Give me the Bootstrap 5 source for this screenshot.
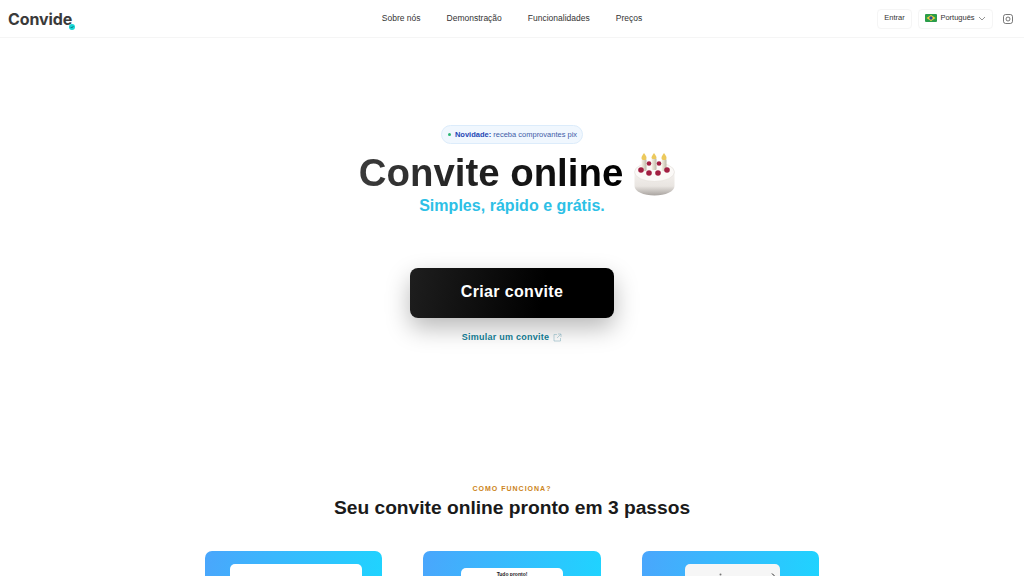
<!DOCTYPE html>
<html lang="pt-BR">
<head>
    <meta charset="UTF-8">
    <meta name="viewport" content="width=device-width, initial-scale=1.0">
    <title>Convide - Convite online</title>
    <link href="https://cdn.jsdelivr.net/npm/bootstrap@5.3.0/dist/css/bootstrap.min.css" rel="stylesheet">
    <style>
        html, body { height: 576px; overflow: hidden; }
        body { font-family: "Liberation Sans", Arial, sans-serif; color: #1a1a1a; background: #fff; }
        .top-bar { height: 38px; border-bottom: 1px solid #f5f5f5; padding: 0 11px 0 8px; }
        .brand-logo { font-family: "Inter", sans-serif; font-weight: 700; font-size: 16px; letter-spacing: -.1px; color: #3a3a3a; text-decoration: none; line-height: 1; }
        .brand-dot { width: 6px; height: 6px; right: -3px; bottom: -3px; }
        .top-links { left: 0; right: 0; gap: 26px; }
        .top-links a { font-size: 8.5px; color: #333; text-decoration: none; }
        .top-btn { font-size: 7.5px; color: #333; border: 1px solid #f5f5f5; border-radius: 4px; height: 20px; padding: 0 6px 1px; background: #fff; }
        .enter-btn { width: 35px; margin-right: 6px; }
        .lang-btn { width: 75px; }
        .insta-icon { margin-left: 10px; }
        .hero-box { padding-top: 87px; }
        .pill-new { font-size: 7.5px; line-height: 1; padding: 4px 5px 4px 6px; height: 19px; border-radius: 10px; background: #f0f7fe; border: 1px solid #dcecfb; color: #3f5da8; }
        .pill-new b { color: #2447b5; }
        .pill-dot { width: 3px; height: 3px; border-radius: 50%; background: #2bb673; }
        .hero-row { padding-left: 10px; gap: 11px; margin-top: 6px; }
        .hero-title { font-size: 38.4px; font-weight: 700; line-height: 46px; margin: 0; background: linear-gradient(90deg, #3b3b3b, #000); -webkit-background-clip: text; background-clip: text; color: transparent; }
        .hero-cake { margin-top: 3px; }
        .hero-sub { font-size: 16px; font-weight: 700; line-height: 20px; letter-spacing: .03px; color: #2dc0e6; margin: 0; }
        .cta-btn { width: 204px; height: 50px; margin-top: 52px; border-radius: 8px; border: 0; font-size: 16px; font-weight: 700; letter-spacing: .35px; color: #fff; padding-bottom: 3px; background: linear-gradient(100deg, #1e1e1e, #000 65%); box-shadow: 0 10px 24px rgba(0,0,0,.28); }
        .sim-link { font-size: 9px; font-weight: 700; letter-spacing: .25px; color: #12788f; text-decoration: none; margin-top: 13px; }
        .steps-box { padding-top: 139px; }
        .steps-tag { font-size: 7px; font-weight: 700; letter-spacing: 1px; color: #cc8420; line-height: 9px; margin: 0; }
        .steps-title { font-size: 19.2px; font-weight: 700; line-height: 24px; margin: 3px 0 0; color: #1a1a1a; }
        .steps-row { margin-top: 31px; gap: 41px; }
        .step-tile { width: 177.5px; height: 160px; border-radius: 7px; background: linear-gradient(100deg, #4aa6fc, #1ad9ff); overflow: hidden; flex: none; }
        .step-screen { background: #fff; border-radius: 5px 5px 0 0; height: 140px; }
        .screen-a { width: 132px; margin: 13px 0 0 25px; }
        .screen-b { width: 102px; margin: 17px auto 0; font-size: 5px; font-weight: 700; text-align: center; padding-top: 3px; line-height: 6px; }
        .screen-c { width: 95px; margin: 13px 0 0 43px; background: #f6f6f6; padding: 9px 5px 0 34px; }
    </style>
</head>
<body>
<nav class="top-bar d-flex align-items-center justify-content-between position-relative">
    <a class="brand-logo position-relative" href="#">Convide
        <svg class="brand-dot position-absolute" viewBox="0 0 6 6"><circle cx="3" cy="3" r="3" fill="#17d6d6"/><path d="M1.700 3 2.700 4 4.400 2.100" fill="none" stroke="#0b5d63" stroke-width=".8"/></svg>
    </a>
    <div class="top-links position-absolute d-flex justify-content-center">
        <a href="#">Sobre nós</a>
        <a href="#">Demonstração</a>
        <a href="#">Funcionalidades</a>
        <a href="#">Preços</a>
    </div>
    <div class="d-flex align-items-center">
        <button class="top-btn enter-btn" type="button">Entrar</button>
        <button class="top-btn lang-btn d-flex align-items-center justify-content-between" type="button">
            <svg width="12" height="8" viewBox="0 0 12 8"><rect width="12" height="8" rx="1" fill="#2a9d4a"/><path d="M6 1 10.500 4 6 7 1.500 4Z" fill="#f2d43a"/><circle cx="6" cy="4" r="1.700" fill="#2a4a9d"/></svg>
            <span>Português</span>
            <svg width="8" height="5" viewBox="0 0 8 5"><path d="M1 1l3 3 3-3" fill="none" stroke="#666" stroke-width=".7"/></svg>
        </button>
        <svg class="insta-icon" width="10" height="10" viewBox="0 0 10 10"><rect x=".5" y=".5" width="9" height="9" rx="2.200" fill="none" stroke="#555" stroke-width=".8"/><circle cx="5" cy="5" r="2" fill="none" stroke="#555" stroke-width=".8"/></svg>
    </div>
</nav>

<main>
    <section class="hero-box d-flex flex-column align-items-center text-center">
        <div class="pill-new d-flex align-items-center gap-1">
            <span class="pill-dot"></span>
            <span><b>Novidade:</b> receba comprovantes pix</span>
        </div>
        <div class="hero-row d-flex align-items-start">
            <h1 class="hero-title">Convite online</h1>
            <svg class="hero-cake" width="41" height="43" viewBox="0 0 41 43">
                <defs>
                    <linearGradient id="cakeSide" x1="0" x2="0" y1="0" y2="1"><stop offset="0" stop-color="#f4f1ee"/><stop offset=".6" stop-color="#e9e5e1"/><stop offset="1" stop-color="#a9a4a0"/></linearGradient>
                    <linearGradient id="candle" x1="0" x2="1" y1="0" y2="0"><stop offset="0" stop-color="#f7f2e6"/><stop offset="1" stop-color="#bfb8a8"/></linearGradient>
                </defs>
                <path d="M.5 19v14c0 5.500 9 9.500 20 9.500s20-4 20-9.500V19Z" fill="url(#cakeSide)"/>
                <ellipse cx="20.500" cy="19" rx="20" ry="9.500" fill="#fbf9f7" stroke="#e2ded9" stroke-width=".6"/>
                <rect x="7.500" y="6" width="5" height="12" rx="1" fill="url(#candle)"/>
                <rect x="17.500" y="5" width="5" height="12" rx="1" fill="url(#candle)"/>
                <rect x="27.500" y="6" width="5" height="12" rx="1" fill="url(#candle)"/>
                <path d="M10 0c1.500 2 2.500 3.500 2.500 5S11.500 7 10 7 7.500 6.500 7.500 5 8.500 2 10 0Z" fill="#ecc95c"/>
                <path d="M20 0c1.500 2 2.500 3.500 2.500 4.500S21.500 6 20 6s-2.500-.5-2.500-1.500S18.500 2 20 0Z" fill="#ecc95c"/>
                <path d="M30 0c1.500 2 2.500 3.500 2.500 5S31.500 7 30 7s-2.500-.5-2.500-2S28.500 2 30 0Z" fill="#ecc95c"/>
                <g fill="#a21f42"><circle cx="7" cy="17" r="2.800"/><circle cx="15" cy="20" r="2.800"/><circle cx="24" cy="20" r="2.800"/><circle cx="33" cy="17" r="2.800"/><circle cx="15" cy="10.500" r="2.300"/><circle cx="25" cy="10.500" r="2.300"/></g>
            </svg>
        </div>
        <p class="hero-sub">Simples, rápido e grátis.</p>
        <button class="cta-btn" type="button">Criar convite</button>
        <a class="sim-link d-flex align-items-center gap-1" href="#">Simular um convite
            <svg width="9" height="9" viewBox="0 0 9 9" fill="none" stroke="#8ab4bf" stroke-width=".6"><path d="M4 1.500H1v6.500h6.500V5M5 1h3v3M8 1 4 5"/></svg>
        </a>
    </section>

    <section class="steps-box text-center">
        <p class="steps-tag">COMO FUNCIONA?</p>
        <h2 class="steps-title">Seu convite online pronto em 3 passos</h2>
        <div class="steps-row d-flex justify-content-center">
            <div class="step-tile"><div class="step-screen screen-a"></div></div>
            <div class="step-tile"><div class="step-screen screen-b">Tudo pronto!</div></div>
            <div class="step-tile">
                <div class="step-screen screen-c d-flex justify-content-between align-items-start">
                    <svg width="3" height="3" viewBox="0 0 3 3"><circle cx="1.500" cy="1.500" r="1" fill="#777"/></svg>
                    <svg width="4" height="5" viewBox="0 0 4 5"><path d="M1 .5 3 2.500 1 4.500" fill="none" stroke="#222" stroke-width="1"/></svg>
                </div>
            </div>
        </div>
    </section>
</main>
<script src="https://cdn.jsdelivr.net/npm/bootstrap@5.3.0/dist/js/bootstrap.bundle.min.js"></script>
</body>
</html>
